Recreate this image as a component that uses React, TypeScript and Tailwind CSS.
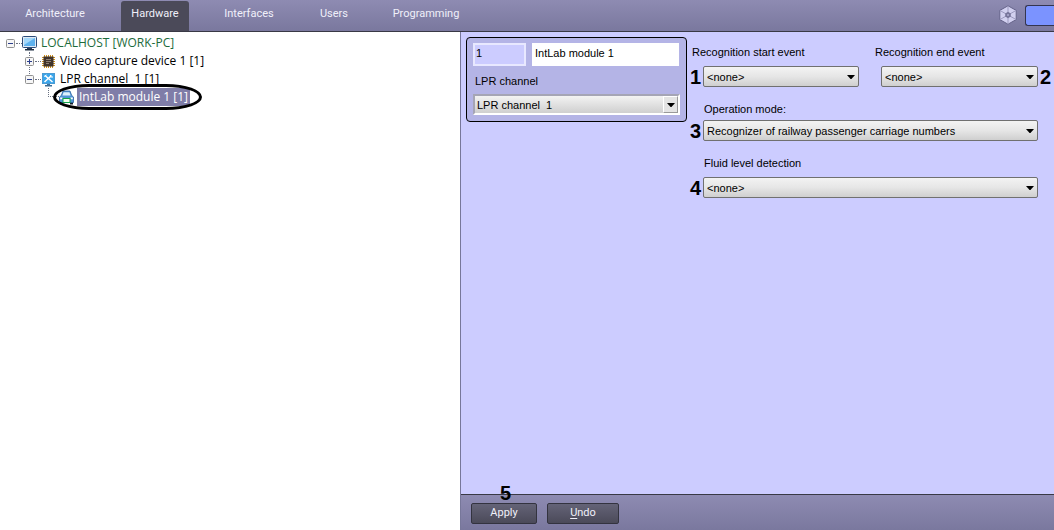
import { useState, type ReactNode } from "react";

const tabs = [
  { name: "Architecture", width: "w-[110px]" },
  { name: "Hardware", width: "w-[68px]" },
  { name: "Interfaces", width: "w-[120px]" },
  { name: "Users", width: "w-[50px]" },
  { name: "Programming", width: "w-[134px]" },
];

function Computer() {
  return (
    <svg viewBox="0 0 15 15" className="size-[15px] shrink-0" aria-hidden="true">
      <rect x="0.5" y="0.5" width="14" height="11" rx="1" fill="#dfe9f4" stroke="#2b4c7a" />
      <rect x="2" y="2" width="11" height="8" fill="#5fb2ee" />
      <path d="M2 2h11L2 9z" fill="#a4d8fa" />
      <path d="M5 12h5v1H5z" fill="#2a3d58" />
      <path d="M3 13h9v1.500H3z" fill="#1d2c40" />
    </svg>
  );
}

function Chip() {
  return (
    <svg viewBox="0 0 15 15" className="size-[15px] shrink-0" aria-hidden="true">
      <path d="M3.500 1v13M5.500 1v13M7.500 1v13M9.500 1v13M11.500 1v13M1 3.500h13M1 5.500h13M1 7.500h13M1 9.500h13M1 11.500h13" stroke="#d08f16" />
      <rect x="2.500" y="2.500" width="10" height="10" fill="#40342c" />
      <path d="M5 5.500h5M5 7.500h5M5 9.500h3" stroke="#8f8175" />
    </svg>
  );
}

function Tools() {
  return (
    <svg viewBox="0 0 15 15" className="size-[15px] shrink-0" aria-hidden="true">
      <rect x="1.500" y="1.500" width="12" height="10" fill="#3aa5ea" stroke="#4a9bd4" />
      <path d="M6 12h3v1H6zM4 13h7v1.500H4z" fill="#3d6f98" />
      <path d="M4 3.500l7.500 6.500M10.500 3.500l-7 6.500" stroke="#fff" strokeWidth="1.500" />
      <path d="M3 4.500L5.500 3M9.500 3v2h2.500" fill="none" stroke="#fff" />
    </svg>
  );
}

function Car() {
  return (
    <svg viewBox="0 0 15 15" className="size-[15px] shrink-0" aria-hidden="true">
      <path d="M1 11h3v3.500H1zM11 11h3v3.500h-3z" fill="#16202c" />
      <path d="M4 1h7l1.700 4.500L14.500 7v5.500H.5V7l1.800-1.500z" fill="#4f94d6" stroke="#2b62a0" strokeWidth=".8" />
      <path d="M4.600 2.200h5.800L11.600 5.500H3.400z" fill="#dcf1fd" />
      <path d="M1.200 7.500h2.300v1.800H1.200zM11.500 7.500h2.300v1.800h-2.300z" fill="#fff" />
      <rect x="4" y="8.500" width="7" height="4" fill="#f2fff2" stroke="#12a34a" />
    </svg>
  );
}

function Expander({ open }: { open: boolean }) {
  return (
    <svg viewBox="0 0 9 9" className="relative size-[9px] shrink-0" aria-hidden="true">
      <rect x="0.5" y="0.5" width="8" height="8" rx="1" fill="#f6f6f6" stroke="#919191" />
      <path d={open ? "M2 4.500h5" : "M2 4.500h5M4.500 2v5"} stroke="#2c3f8c" />
    </svg>
  );
}

function Dots() {
  return <span className="ml-px w-[6px] shrink-0 border-t border-dotted border-gray-500" />;
}

function Node({ icon, children }: { icon: ReactNode; children: ReactNode }) {
  return (
    <>
      {icon}
      <span className="ml-0.5 px-0.5 whitespace-pre">{children}</span>
    </>
  );
}

function Tree() {
  return (
    <ul className="pt-[2px] pl-[6px] font-['Open_Sans','Noto_Sans',sans-serif] text-[12px] leading-[18px] text-black">
      <li>
        <div className="flex items-center text-[#1d6b3c]">
          <Expander open />
          <Dots />
          <Node icon={<Computer />}>LOCALHOST [WORK-PC]</Node>
        </div>
        <ul className="relative pl-[19px]">
          <li className="absolute top-0 left-[23px] h-6 border-l border-dotted border-gray-500" aria-hidden="true" />
          <li className="flex items-center">
            <Expander open={false} />
            <Dots />
            <Node icon={<Chip />}>Video capture device 1 [1]</Node>
          </li>
          <li>
            <div className="flex items-center">
              <Expander open />
              <Dots />
              <Node icon={<Tools />}>{"LPR channel  1 [1]"}</Node>
            </div>
            <div className="relative ml-[23px] flex w-max items-center">
              <span className="h-[9px] w-[11px] self-start border-b border-l border-dotted border-gray-500" />
              <Car />
              <button type="button" className="ml-[3px] bg-[#7f7da8] px-0.5 text-white">
                IntLab module 1 [1]
              </button>
              <span className="pointer-events-none absolute -inset-y-1 -right-3 left-[5px] rounded-[36px/13px] border-[3px] border-black" />
            </div>
          </li>
        </ul>
      </li>
    </ul>
  );
}

function Arrow() {
  return (
    <svg viewBox="0 0 8 4" className="h-1 w-2" aria-hidden="true">
      <path d="M0 0h8L4 4.500z" fill="#000" />
    </svg>
  );
}

function Badge({ children }: { children: ReactNode }) {
  return <span className="pointer-events-none text-[20px] leading-5 font-bold text-black">{children}</span>;
}

function Picker({ id, value, mark, markSide = "left" }: { id: string; value: string; mark: string; markSide?: "left" | "right" }) {
  return (
    <div className="relative">
      <select
        id={id}
        defaultValue={value}
        className="block h-[21px] w-full appearance-none rounded-[2px] border border-[#707070] bg-linear-to-b from-[#f3f3f3] from-0% via-[#e6e6e6] via-50% to-[#cfcfcf] pt-px pr-5 pl-[3px] text-[11px] text-black"
      >
        <option>{value}</option>
      </select>
      <span className="pointer-events-none absolute inset-y-0 right-1 flex items-center pt-px">
        <Arrow />
      </span>
      <span className={markSide === "left" ? "absolute inset-y-0 right-full mr-0.5 flex items-center" : "absolute inset-y-0 left-full ml-0.5 flex items-center"}>
        <Badge>{mark}</Badge>
      </span>
    </div>
  );
}

export default function App() {
  const [active, setActive] = useState("Hardware");
  return (
    <div className="flex min-h-screen flex-col bg-[#ccccff] font-['Liberation_Sans',Arial,sans-serif] text-[11px] text-black">
      <header className="flex h-8 items-stretch justify-between border-b border-[#393945] bg-linear-to-b from-[#8e8bb2] to-[#7a789e] font-['Roboto','Liberation_Sans',sans-serif]">
        <nav className="flex">
          {tabs.map((tab) => (
            <button
              key={tab.name}
              type="button"
              onClick={() => setActive(tab.name)}
              className={
                tab.name === active
                  ? "mt-px ml-[11px] w-[68px] rounded-t-[3px] bg-[#4b4a59] pb-1 text-[#f0f0fa]"
                  : `${tab.width} pb-[3px] text-[#f0f0fa]`
              }
            >
              {tab.name}
            </button>
          ))}
        </nav>
        <div className="flex items-center gap-[7px] pb-px">
          <svg viewBox="0 0 20 20" className="size-5" aria-hidden="true">
            <path d="M10 .8l8.200 4.600v9.200L10 19.200l-8.200-4.600V5.400z" fill="#d2d0f0" stroke="#66648a" />
            <path d="M10 1v18M2 5.500l16 9M18 5.500l-16 9" stroke="#9c9abf" />
            <path d="M10 6.800l2.800 1.600v3.200L10 13.200l-2.800-1.600V8.400z" fill="#77759b" />
            <circle cx="10" cy="10" r="1" fill="#aeacd0" />
          </svg>
          <span className="h-[21px] w-[29px] rounded-l-[3px] border-y border-l border-[#34354f] bg-[#7b93ff]" />
        </div>
      </header>

      <div className="flex flex-1">
        <aside className="w-[461px] shrink-0 border-r border-[#77779a] bg-white">
          <Tree />
        </aside>

        <main className="flex min-w-0 flex-1 flex-col">
          <form className="flex flex-1 flex-col" onSubmit={(e) => e.preventDefault()}>
            <div className="flex flex-1 items-start gap-[5px] pt-[5px] pr-4 pl-[5px]">
              <section className="w-[221px] shrink-0 rounded-[4px] border border-black bg-[#b4b4e6] px-[6px] pt-[5px] pb-[6px]">
                <div className="flex gap-[6px] pr-px">
                  <input aria-label="Number" readOnly defaultValue="1" className="h-[23px] w-[53px] border-2 border-[#e8e8ff] bg-[#ccccff] px-px pb-[3px]" />
                  <input aria-label="Name" defaultValue="IntLab module 1" className="h-[23px] min-w-0 flex-1 bg-white px-[3px] pb-[3px]" />
                </div>
                <label htmlFor="channel" className="mt-2 block pl-[2px] leading-[14px]">
                  LPR channel
                </label>
                <div className="relative mt-[6px]">
                  <select
                    id="channel"
                    defaultValue="1"
                    className="block h-[21px] w-full appearance-none border-2 border-t-[#a5a5b5] border-r-white border-b-white border-l-[#a5a5b5] bg-linear-to-b from-[#f3f3f3] to-[#cfcfcf] pt-px pr-5 pl-[2px]"
                  >
                    <option value="1">{"LPR channel \u00a01"}</option>
                  </select>
                  <span className="pointer-events-none absolute inset-y-[2px] right-[2px] flex w-[15px] items-center justify-center border border-t-white border-r-[#999] border-b-[#999] border-l-white bg-[#e4e4e4]">
                    <Arrow />
                  </span>
                </div>
              </section>

              <section className="min-w-0 flex-1 pt-2">
                <div className="grid grid-cols-[167fr_163fr] gap-4">
                  <div>
                    <label htmlFor="start" className="block leading-[14px] whitespace-nowrap">
                      Recognition start event
                    </label>
                    <div className="pt-[7px] pl-[11px]">
                      <Picker id="start" value="<none>" mark="1" />
                    </div>
                  </div>
                  <div>
                    <label htmlFor="end" className="block leading-[14px] whitespace-nowrap">
                      Recognition end event
                    </label>
                    <div className="pt-[7px] pl-[6px]">
                      <Picker id="end" value="<none>" mark="2" markSide="right" />
                    </div>
                  </div>
                </div>
                <div className="pl-[11px]">
                  <label htmlFor="mode" className="mt-[15px] mb-1 block pl-px leading-[14px]">
                    Operation mode:
                  </label>
                  <Picker id="mode" value="Recognizer of railway passenger carriage numbers" mark="3" />
                  <label htmlFor="fluid" className="mt-[15px] mb-[7px] block pl-px leading-[14px]">
                    Fluid level detection
                  </label>
                  <Picker id="fluid" value="<none>" mark="4" />
                </div>
              </section>
            </div>

            <footer className="flex h-9 items-center gap-[10px] border-t border-[#393945] bg-linear-to-b from-[#8e8bb2] to-[#7a789e] pt-0.5 pl-[10px] font-['Roboto','Liberation_Sans',sans-serif] text-[11px] text-[#f0f0fa]">
              <div className="relative">
                <button type="submit" className="block h-[21px] w-[66px] rounded-[2px] border border-[#33333f] bg-linear-to-b from-[#646377] to-[#4b4a59]">
                  Apply
                </button>
                <span className="absolute inset-x-0 bottom-full flex justify-center pl-[3px] font-['Liberation_Sans',Arial,sans-serif]">
                  <Badge>5</Badge>
                </span>
              </div>
              <button type="reset" className="h-[21px] w-[72px] rounded-[2px] border border-[#33333f] bg-linear-to-b from-[#646377] to-[#4b4a59]">
                <span className="underline underline-offset-2">U</span>ndo
              </button>
            </footer>
          </form>
        </main>
      </div>
    </div>
  );
}
